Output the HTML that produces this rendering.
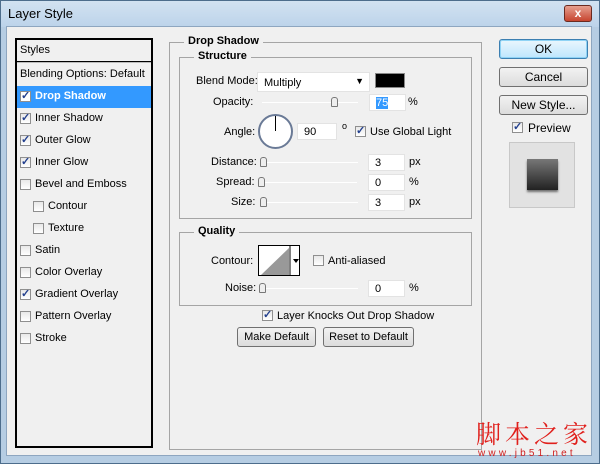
<!DOCTYPE html><html><head><style>
*{box-sizing:border-box}
body{margin:0;width:600px;height:464px;overflow:hidden;font-family:"Liberation Sans",sans-serif;font-size:11px;color:#000}
.win{position:absolute;left:0;top:0;width:600px;height:464px;background:#b6cde3;border:1px solid #4d6d8c}
.title{position:absolute;left:0;top:0;width:598px;height:26px;background:linear-gradient(#d2e2f1,#bcd3ea)}
.title span{position:absolute;left:7px;top:5px;font-size:13px}
.close{position:absolute;left:563px;top:4px;width:28px;height:17px;border:1px solid #6b2a20;border-radius:3px;background:linear-gradient(#e6a090,#c7452f);color:#fff;font-weight:bold;text-align:center;line-height:15px;font-size:12px}
.body{position:absolute;left:6px;top:26px;width:586px;height:430px;background:#f0f0f0;border:1px solid #8ea6c0}
.a{position:absolute;white-space:nowrap}
.cb{position:absolute;width:11px;height:11px;border:1px solid #8f8f8f;background:linear-gradient(#e8e8e8,#fff)}
.cb.on::after{content:"✓";position:absolute;left:0;top:-3px;font-size:11px;color:#23408e;font-weight:bold}
.inp{position:absolute;height:17px;background:#fff;border:1px solid #e3e3e3;padding:2px 0 0 6px}
.sl{position:absolute;height:1px;background:#bbb;border-bottom:1px solid #fff}
.th{position:absolute;width:7px;height:10px;border:1px solid #777;border-radius:3px 3px 1px 1px;background:#eee}
.btn{position:absolute;height:20px;border:1px solid #707070;border-radius:3px;background:linear-gradient(#f2f2f2,#dcdcdc);text-align:center;line-height:18px;font-size:12px}
.grp{position:absolute;border:1px solid #a5a5a5}
.lg{position:absolute;background:#f0f0f0;font-weight:bold;padding:0 4px;top:-8px}
</style></head><body>
<div class="win"><div class="title"><span>Layer Style</span><div class="close">x</div></div></div>
<div class="body"></div>
<div class="a" style="left:15px;top:38px;width:138px;height:410px;border:2px solid #000;background:#f0f0f0"></div>
<div class="a" style="left:17px;top:61px;width:134px;height:2px;border-top:1px solid #000;border-bottom:1px solid #bbb"></div>
<div class="a" style="left:20px;top:44px">Styles</div>
<div class="a" style="left:20px;top:68px">Blending Options: Default</div>
<div class="a" style="left:17px;top:86px;width:134px;height:22px;background:#3399ff"></div>
<div class="cb on" style="left:20px;top:91px;background:#fff"></div><div class="a" style="left:35px;top:90px;color:#fff;font-weight:bold">Drop Shadow</div>
<div class="cb on" style="left:20px;top:113px"></div><div class="a" style="left:35px;top:112px">Inner Shadow</div>
<div class="cb on" style="left:20px;top:135px"></div><div class="a" style="left:35px;top:134px">Outer Glow</div>
<div class="cb on" style="left:20px;top:157px"></div><div class="a" style="left:35px;top:156px">Inner Glow</div>
<div class="cb" style="left:20px;top:179px"></div><div class="a" style="left:35px;top:178px">Bevel and Emboss</div>
<div class="cb" style="left:33px;top:201px"></div><div class="a" style="left:48px;top:200px">Contour</div>
<div class="cb" style="left:33px;top:223px"></div><div class="a" style="left:48px;top:222px">Texture</div>
<div class="cb" style="left:20px;top:245px"></div><div class="a" style="left:35px;top:244px">Satin</div>
<div class="cb" style="left:20px;top:267px"></div><div class="a" style="left:35px;top:266px">Color Overlay</div>
<div class="cb on" style="left:20px;top:289px"></div><div class="a" style="left:35px;top:288px">Gradient Overlay</div>
<div class="cb" style="left:20px;top:311px"></div><div class="a" style="left:35px;top:310px">Pattern Overlay</div>
<div class="cb" style="left:20px;top:333px"></div><div class="a" style="left:35px;top:332px">Stroke</div>
<div class="grp" style="left:169px;top:42px;width:313px;height:408px"><span class="lg" style="left:14px">Drop Shadow</span></div>
<div class="grp" style="left:179px;top:57px;width:293px;height:162px"><span class="lg" style="left:14px">Structure</span></div>
<div class="a" style="left:196px;top:75px">Blend Mode:</div>
<div class="inp" style="left:257px;top:72px;width:113px;height:20px;padding-top:4px">Multiply<span style="position:absolute;right:5px;top:3px;font-size:9px">▼</span></div>
<div class="a" style="left:375px;top:73px;width:30px;height:15px;background:#000;border:1px solid #888"></div>
<div class="a" style="left:213px;top:96px">Opacity:</div>
<div class="sl" style="left:262px;top:102px;width:96px"></div><div class="th" style="left:331px;top:97px"></div>
<div class="inp" style="left:369px;top:94px;width:37px"><span style="background:#3399ff;color:#fff">75</span></div><div class="a" style="left:408px;top:96px">%</div>
<div class="a" style="left:224px;top:126px">Angle:</div>
<div class="a" style="left:258px;top:114px;width:35px;height:35px;border-radius:50%;border:2px solid #6a7a96;background:#fff"></div>
<div class="a" style="left:275px;top:116px;width:1px;height:15px;background:#000"></div>
<div class="inp" style="left:297px;top:123px;width:40px">90</div><div class="a" style="left:342px;top:121px;font-size:9px">o</div>
<div class="cb on" style="left:355px;top:126px"></div><div class="a" style="left:370px;top:126px">Use Global Light</div>
<div class="a" style="left:211px;top:156px">Distance:</div>
<div class="sl" style="left:262px;top:162px;width:96px"></div><div class="th" style="left:260px;top:157px"></div>
<div class="inp" style="left:368px;top:154px;width:37px">3</div><div class="a" style="left:409px;top:156px">px</div>
<div class="a" style="left:216px;top:176px">Spread:</div>
<div class="sl" style="left:261px;top:182px;width:96px"></div><div class="th" style="left:258px;top:177px"></div>
<div class="inp" style="left:368px;top:174px;width:37px">0</div><div class="a" style="left:409px;top:176px">%</div>
<div class="a" style="left:231px;top:196px">Size:</div>
<div class="sl" style="left:262px;top:202px;width:96px"></div><div class="th" style="left:260px;top:197px"></div>
<div class="inp" style="left:368px;top:194px;width:37px">3</div><div class="a" style="left:409px;top:196px">px</div>
<div class="grp" style="left:179px;top:232px;width:293px;height:74px"><span class="lg" style="left:14px">Quality</span></div>
<div class="a" style="left:211px;top:255px">Contour:</div>
<div class="a" style="left:258px;top:245px;width:42px;height:31px;border:1px solid #000;background:#fff;overflow:hidden">
<svg width="42" height="31" style="position:absolute;left:0;top:0"><polygon points="2,29 30,2 30,29" fill="#999"/><line x1="31" y1="0" x2="31" y2="31" stroke="#000"/><polygon points="34,13 40,13 37,17" fill="#000"/></svg></div>
<div class="cb" style="left:313px;top:255px"></div><div class="a" style="left:328px;top:255px">Anti-aliased</div>
<div class="a" style="left:225px;top:282px">Noise:</div>
<div class="sl" style="left:262px;top:288px;width:96px"></div><div class="th" style="left:259px;top:283px"></div>
<div class="inp" style="left:368px;top:280px;width:37px">0</div><div class="a" style="left:409px;top:282px">%</div>
<div class="cb on" style="left:262px;top:310px"></div><div class="a" style="left:277px;top:310px">Layer Knocks Out Drop Shadow</div>
<div class="btn" style="left:237px;top:327px;width:79px;font-size:11px">Make Default</div>
<div class="btn" style="left:323px;top:327px;width:91px;font-size:11px">Reset to Default</div>
<div class="btn" style="left:499px;top:39px;width:89px;border-color:#3c7fb1;background:linear-gradient(#eaf6fd,#bee6fd);box-shadow:inset 0 0 0 1px #8fd3f5">OK</div>
<div class="btn" style="left:499px;top:67px;width:89px">Cancel</div>
<div class="btn" style="left:499px;top:95px;width:89px">New Style...</div>
<div class="cb on" style="left:512px;top:122px"></div><div class="a" style="left:528px;top:121px;font-size:12px">Preview</div>
<div class="a" style="left:509px;top:142px;width:66px;height:66px;background:#e2e2e2;border:1px solid #c8c8c8"></div>
<div class="a" style="left:527px;top:159px;width:31px;height:31px;background:linear-gradient(#777,#222);box-shadow:0 2px 2px rgba(0,0,0,.5)"></div>
<div class="a" style="left:476px;top:419px;font-size:25px;line-height:28px;color:#e0201c;font-family:'Noto Serif CJK SC','WenQuanYi Zen Hei',serif;letter-spacing:4px">脚本之家</div>
<div class="a" style="left:478px;top:448px;font-size:10px;line-height:12px;color:#d02020;letter-spacing:3.2px">www.jb51.net</div>
</body></html>
